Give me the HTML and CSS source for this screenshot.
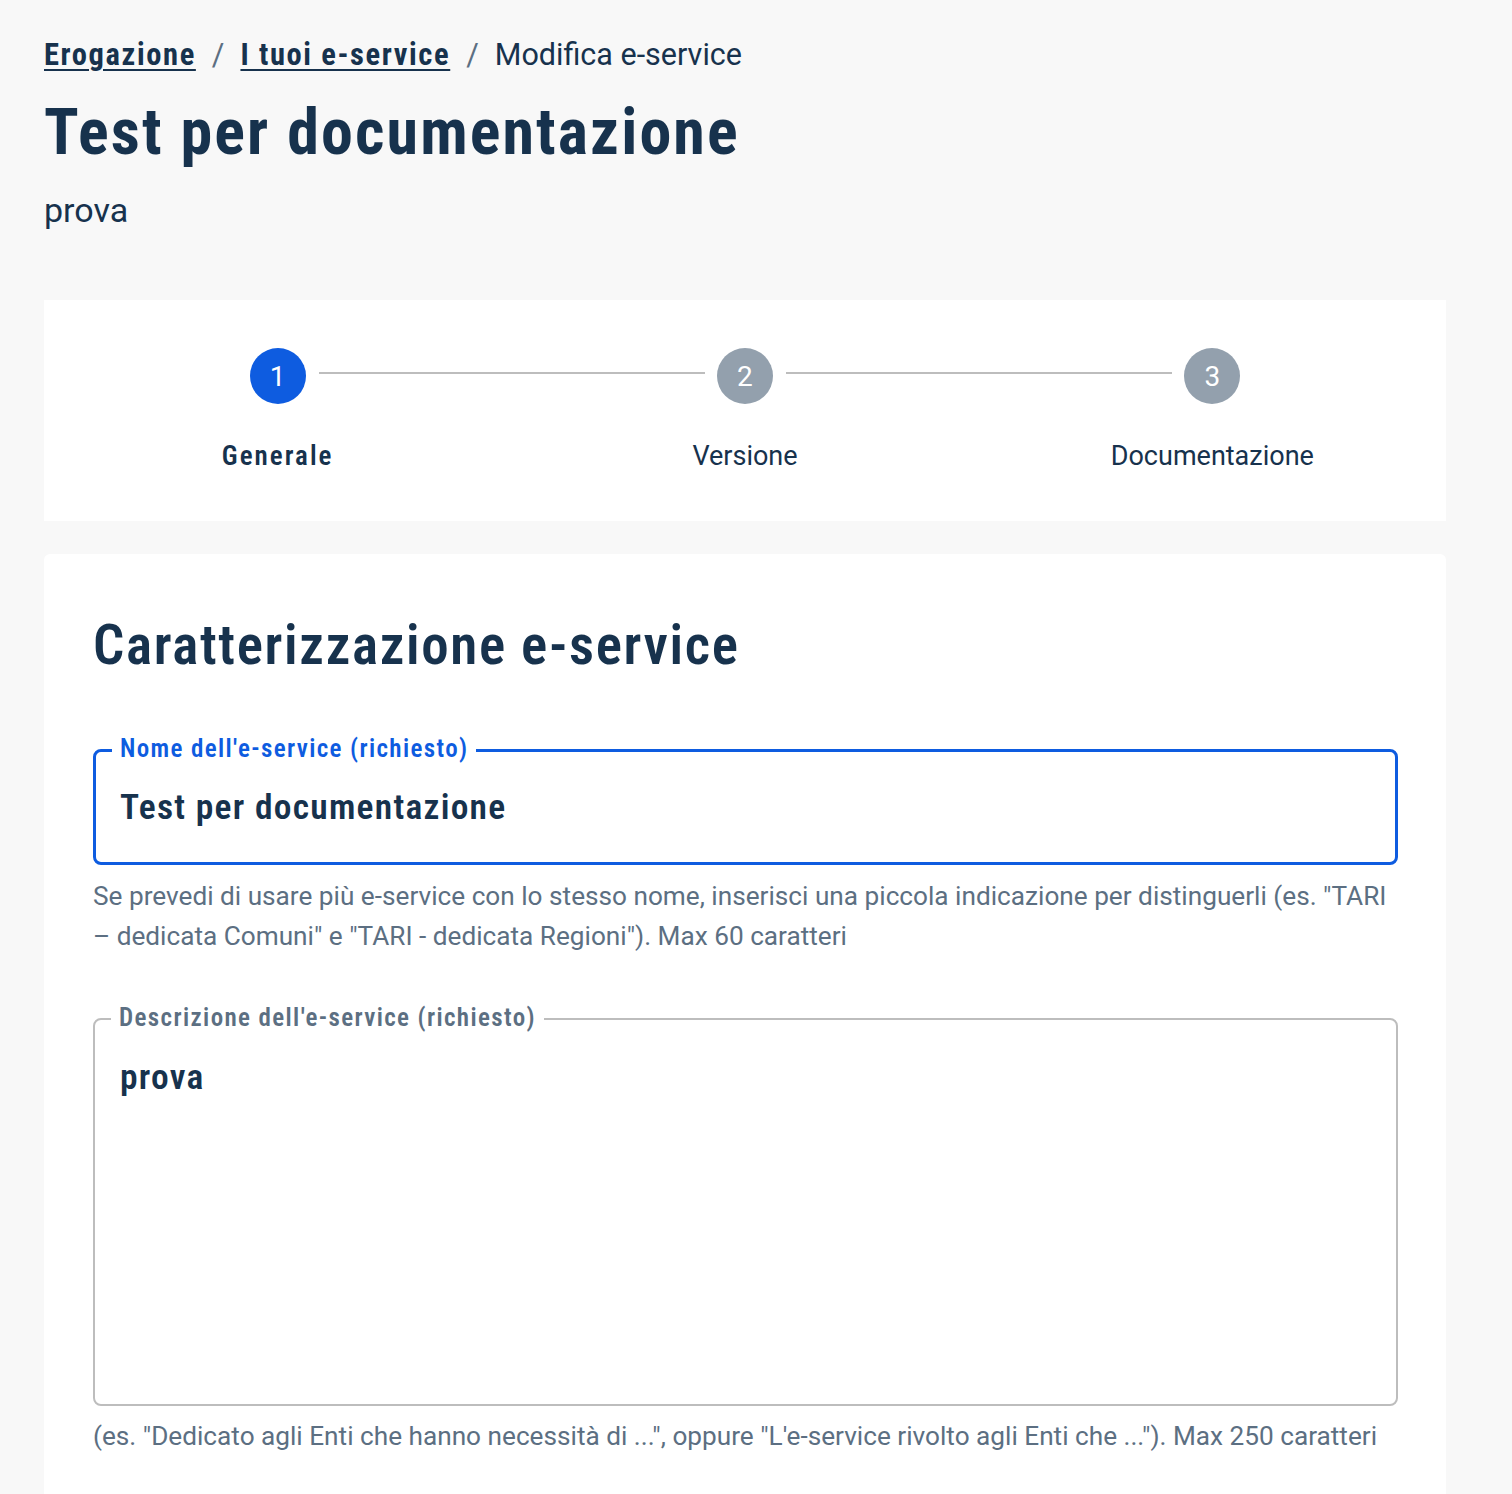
FILE: index.html
```html
<!DOCTYPE html>
<html lang="it">
<head>
<meta charset="utf-8">
<title>Modifica e-service</title>
<link rel="stylesheet" href="styles.css">
</head>
<body>
<main class="page">
  <nav class="breadcrumb">
    <a class="crumb-link" href="#">Erogazione</a>
    <span class="sep">/</span>
    <a class="crumb-link" href="#">I tuoi e-service</a>
    <span class="sep">/</span>
    <span class="crumb-current">Modifica e-service</span>
  </nav>
  <h1 class="page-title">Test per documentazione</h1>
  <p class="page-desc">prova</p>

  <section class="stepper-card">
    <div class="stepper">
      <div class="step">
        <div class="step-circle active">1</div>
        <div class="step-label active">Generale</div>
      </div>
      <div class="step">
        <span class="connector"></span>
        <div class="step-circle">2</div>
        <div class="step-label">Versione</div>
      </div>
      <div class="step">
        <span class="connector"></span>
        <div class="step-circle">3</div>
        <div class="step-label">Documentazione</div>
      </div>
    </div>
  </section>

  <section class="form-card">
    <h2 class="section-title">Caratterizzazione e-service</h2>

    <div class="field field-focused">
      <span class="field-label">Nome dell'e-service (richiesto)</span>
      <div class="field-value">Test per documentazione</div>
    </div>
    <p class="helper helper-first">Se prevedi di usare più e-service con lo stesso nome, inserisci una piccola indicazione per distinguerli (es. "TARI –&nbsp;dedicata Comuni" e "TARI - dedicata Regioni"). Max 60 caratteri</p>

    <div class="field field-area">
      <span class="field-label">Descrizione dell'e-service (richiesto)</span>
      <div class="field-value">prova</div>
    </div>
    <p class="helper helper-second">(es. "Dedicato agli Enti che hanno necessità di ...", oppure "L'e-service rivolto agli Enti che ..."). Max 250 caratteri</p>
  </section>
</main>
</body>
</html>
```
FILE: styles.css
```css
* { box-sizing: border-box; }

html, body {
  margin: 0;
  padding: 0;
}

body {
  background: #f8f8f8;
  color: #17324d;
  font-family: "Roboto", "Noto Sans", sans-serif;
}

.page {
  padding: 35px 66px 0 44px;
  height: 1494px;
  overflow: hidden;
}

/* Breadcrumb */
.breadcrumb {
  display: flex;
  align-items: center;
  height: 40px;
  font-size: 30.5px;
  line-height: 40px;
}

.crumb-link {
  color: #17324d;
  font-family: "Roboto Condensed", "Roboto", sans-serif;
  font-weight: 700;
  letter-spacing: 0.053em;
  text-decoration: underline;
  text-decoration-thickness: 2px;
  text-underline-offset: 4px;
}

.sep {
  color: #5c6f82;
  margin: 0 16px;
}

.crumb-current {
  color: #17324d;
}

/* Title */
.page-title {
  margin: 18px 0 0;
  font-family: "Roboto Condensed", "Roboto", sans-serif;
  font-weight: 700;
  font-size: 64px;
  line-height: 80px;
  letter-spacing: 0.033em;
}

.page-desc {
  margin: 15px 0 0;
  font-size: 34px;
  line-height: 44px;
}

/* Stepper */
.stepper-card {
  margin-top: 68px;
  background: #ffffff;
  padding: 48px 0 47px;
}

.stepper {
  display: grid;
  grid-template-columns: repeat(3, 1fr);
}

.step {
  position: relative;
  display: flex;
  flex-direction: column;
  align-items: center;
}

.step-circle {
  width: 56px;
  height: 56px;
  border-radius: 50%;
  background: #93a0ad;
  color: #ffffff;
  font-size: 28px;
  display: flex;
  align-items: center;
  justify-content: center;
}

.step-circle.active {
  background: #0e5ce0;
}

.connector {
  position: absolute;
  top: 24px;
  left: calc(-50% + 41px);
  right: calc(50% + 40px);
  border-top: 2px solid #bdbdbd;
}

.step-label {
  margin-top: 34px;
  font-size: 27px;
  line-height: 36px;
  color: #17324d;
}

.step-label.active {
  font-family: "Roboto Condensed", "Roboto", sans-serif;
  font-weight: 600;
  letter-spacing: 0.075em;
}

/* Form card */
.form-card {
  margin-top: 33px;
  background: #ffffff;
  border-radius: 6px 6px 0 0;
  padding: 58px 48px 200px 49px;
}

.section-title {
  margin: 0;
  font-family: "Roboto Condensed", "Roboto", sans-serif;
  font-weight: 600;
  font-size: 55px;
  line-height: 66px;
  letter-spacing: 0.03em;
}

.field {
  position: relative;
  margin-top: 71px;
  border-radius: 8px;
  background: #ffffff;
}

.field-focused {
  height: 116px;
  border: 3px solid #0e5ce0;
  display: flex;
  align-items: center;
  padding: 0 24px;
}

.field-area {
  margin-top: 62px;
  height: 388px;
  border: 2px solid #bdbdbd;
  padding: 35px 25px;
}

.field-label {
  position: absolute;
  left: 16px;
  top: -18px;
  padding: 0 8px;
  background: #ffffff;
  font-family: "Roboto Condensed", "Roboto", sans-serif;
  font-weight: 600;
  font-size: 25px;
  line-height: 30px;
  letter-spacing: 0.055em;
  color: #5c6f82;
}

.field-focused .field-label {
  color: #0e5ce0;
}

.field-area .field-label {
  top: -17px;
}

.field-value {
  font-family: "Roboto Condensed", "Roboto", sans-serif;
  font-weight: 600;
  font-size: 35.5px;
  line-height: 44px;
  letter-spacing: 0.035em;
  color: #17324d;
}

.helper {
  margin: 11px 0 0;
  font-size: 26.2px;
  line-height: 40px;
  color: #5c6f82;
}

.helper-second {
  margin-top: 10px;
}
```
